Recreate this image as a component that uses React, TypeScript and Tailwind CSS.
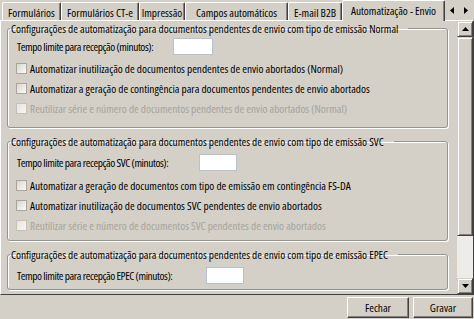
import React from "react";

const F = "font-['Open_Sans',sans-serif] font-stretch-condensed text-[11.3px] leading-[13px] text-black whitespace-nowrap";

function Tab({ label, className, selected }: { label: string; className: string; selected?: boolean }) {
  if (selected) {
    return (
      <div
        className={`${className} relative z-10 h-[21px] -mb-[1px] bg-[#d4d0c8] border-t border-l border-t-white border-l-white border-r border-r-[#404040] shadow-[inset_-1px_0_0_#808080] rounded-t-[2px] flex items-start justify-center pt-[3px]`}
      >
        {label}
      </div>
    );
  }
  return (
    <div
      className={`${className} h-[18px] bg-[#d4d0c8] border-t border-l border-t-white border-l-white border-r border-r-[#404040] shadow-[inset_-1px_0_0_#808080] rounded-t-[2px] flex items-start justify-center pt-[3px]`}
    >
      {label}
    </div>
  );
}

function Check({ label, disabled }: { label: string; disabled?: boolean }) {
  return (
    <div className="flex items-center h-[20px]">
      <span
        className={
          disabled
            ? "-ml-[1px] w-[11px] h-[11px] shrink-0 border border-[#c4c1b9] bg-[linear-gradient(135deg,#e6e4de,#f8f7f4)]"
            : "-ml-[1px] w-[11px] h-[11px] shrink-0 border border-[#a9a59c] bg-[linear-gradient(135deg,#d9d6ce,#fbfaf8)]"
        }
      />
      <span className={disabled ? "ml-[3px] text-[#a6a39b]" : "ml-[3px]"}>{label}</span>
    </div>
  );
}

function TempoRow({ label, labelW, inputW }: { label: string; labelW: string; inputW: string }) {
  return (
    <div className="flex items-center h-[17px]">
      <span className={`${labelW} shrink-0 pr-[4px] tracking-[-0.4px]`}>{label}</span>
      <span className={`${inputW} h-[17px] shrink-0 bg-white border border-[#b4c2d6]`} />
    </div>
  );
}

function Group({
  title,
  className,
  children,
}: {
  title: string;
  className: string;
  children: React.ReactNode;
}) {
  return (
    <fieldset
      className={`${className} ml-[7px] w-[441px] shrink-0 border border-[#97948d] rounded-[3px] shadow-[1px_1px_0_#ffffff,inset_1px_1px_0_#ffffff]`}
    >
      <legend className="ml-[2px] pl-[1px] pr-[10px] leading-[13px]">{title}</legend>
      {children}
    </fieldset>
  );
}

function Btn({ label, className }: { label: string; className: string }) {
  return (
    <div
      className={`${className} h-[21px] flex items-center justify-center bg-[#d4d0c8] border border-t-white border-l-white border-r-[#404040] border-b-[#404040] shadow-[inset_-1px_-1px_0_#808080]`}
    >
      {label}
    </div>
  );
}

export default function App() {
  return (
    <div className={`${F} w-[474px] h-[319px] bg-[#d4d0c8] flex flex-col overflow-hidden`}>
      {/* tab strip */}
      <div className="h-[20px] flex items-end pl-[2px] shrink-0">
        <Tab label="Formulários" className="w-[59px]" />
        <Tab label="Formulários CT-e" className="w-[78px]" />
        <Tab label="Impressão" className="w-[46px]" />
        <Tab label="Campos automáticos" className="w-[103px]" />
        <Tab label="E-mail B2B" className="w-[54px]" />
        <Tab label="Automatização - Envio" className="w-[103px]" selected />
        <div className="self-start mt-[2px] flex h-[16px]">
          <div className="w-[14px] h-[16px] flex items-center justify-center">
            <svg width="4" height="7" viewBox="0 0 4 7">
              <path d="M4 0 L0 3.5 L4 7 Z" fill="#000" />
            </svg>
          </div>
          <div className="w-[14px] h-[16px] flex items-center justify-center">
            <svg width="4" height="7" viewBox="0 0 4 7">
              <path d="M0 0 L4 3.5 L0 7 Z" fill="#000" />
            </svg>
          </div>
        </div>
      </div>

      {/* panel */}
      <div className="h-[275px] shrink-0 flex border-t border-l border-t-white border-l-white border-r border-b border-r-[#404040] border-b-[#404040]">
        <div className="flex-1 overflow-hidden flex flex-col pt-[1px] -ml-[1px]">
          <Group title="Configurações de automatização para documentos pendentes de envio com tipo de emissão Normal" className="">
            <div className="pl-[9px] pb-[9px] flex flex-col">
              <div className="mt-[3px]">
                <TempoRow label="Tempo limite para recepção (minutos):" labelW="min-w-[156px]" inputW="w-[40px]" />
              </div>
              <div className="mt-[3px] flex flex-col">
                <Check label="Automatizar inutilização de documentos pendentes de envio abortados (Normal)" />
                <Check label="Automatizar a geração de contingência para documentos pendentes de envio abortados" />
                <Check label="Reutilizar série e número de documentos pendentes de envio abortados (Normal)" disabled />
              </div>
            </div>
          </Group>
          <Group title="Configurações de automatização para documentos pendentes de envio com tipo de emissão SVC" className="mt-[7px]">
            <div className="pl-[9px] pb-[5px] flex flex-col">
              <div className="mt-[6px]">
                <TempoRow label="Tempo limite para recepção SVC (minutos):" labelW="min-w-[182px]" inputW="w-[38px]" />
              </div>
              <div className="mt-[4px] flex flex-col">
                <Check label="Automatizar a geração de documentos com tipo de emissão em contingência FS-DA" />
                <Check label="Automatizar inutilização de documentos SVC pendentes de envio abortados" />
                <Check label="Reutilizar série e número de documentos SVC pendentes de envio abortados" disabled />
              </div>
            </div>
          </Group>
          <Group title="Configurações de automatização para documentos pendentes de envio com tipo de emissão EPEC" className="mt-[7px]">
            <div className="pl-[9px] pb-[5px] flex flex-col">
              <div className="mt-[6px]">
                <TempoRow label="Tempo limite para recepção EPEC (minutos):" labelW="min-w-[189px]" inputW="w-[38px]" />
              </div>
            </div>
          </Group>
        </div>

        {/* scrollbar */}
        <div className="w-[16px] flex flex-col shrink-0">
          <div className="h-[16px] flex items-center justify-center bg-[#d4d0c8] border border-t-[#d4d0c8] border-l-[#d4d0c8] border-r-[#404040] border-b-[#404040] shadow-[inset_1px_1px_0_#ffffff,inset_-1px_-1px_0_#808080]">
            <svg width="7" height="4" viewBox="0 0 7 4">
              <path d="M3.5 0 L7 4 L0 4 Z" fill="#000" />
            </svg>
          </div>
          <div className="h-[199px] bg-[#d4d0c8] border border-t-[#d4d0c8] border-l-[#d4d0c8] border-r-[#404040] border-b-[#404040] shadow-[inset_1px_1px_0_#ffffff,inset_-1px_-1px_0_#808080]" />
          <div className="flex-1 bg-[#eeece8]" />
          <div className="h-[16px] flex items-center justify-center bg-[#d4d0c8] border border-t-[#d4d0c8] border-l-[#d4d0c8] border-r-[#404040] border-b-[#404040] shadow-[inset_1px_1px_0_#ffffff,inset_-1px_-1px_0_#808080]">
            <svg width="7" height="4" viewBox="0 0 7 4">
              <path d="M0 0 L7 0 L3.5 4 Z" fill="#000" />
            </svg>
          </div>
        </div>
      </div>

      {/* buttons */}
      <div className="flex justify-end gap-[4px] pr-[1px] pt-[2px]">
        <Btn label="Fechar" className="w-[62px]" />
        <Btn label="Gravar" className="w-[60px]" />
      </div>
    </div>
  );
}
